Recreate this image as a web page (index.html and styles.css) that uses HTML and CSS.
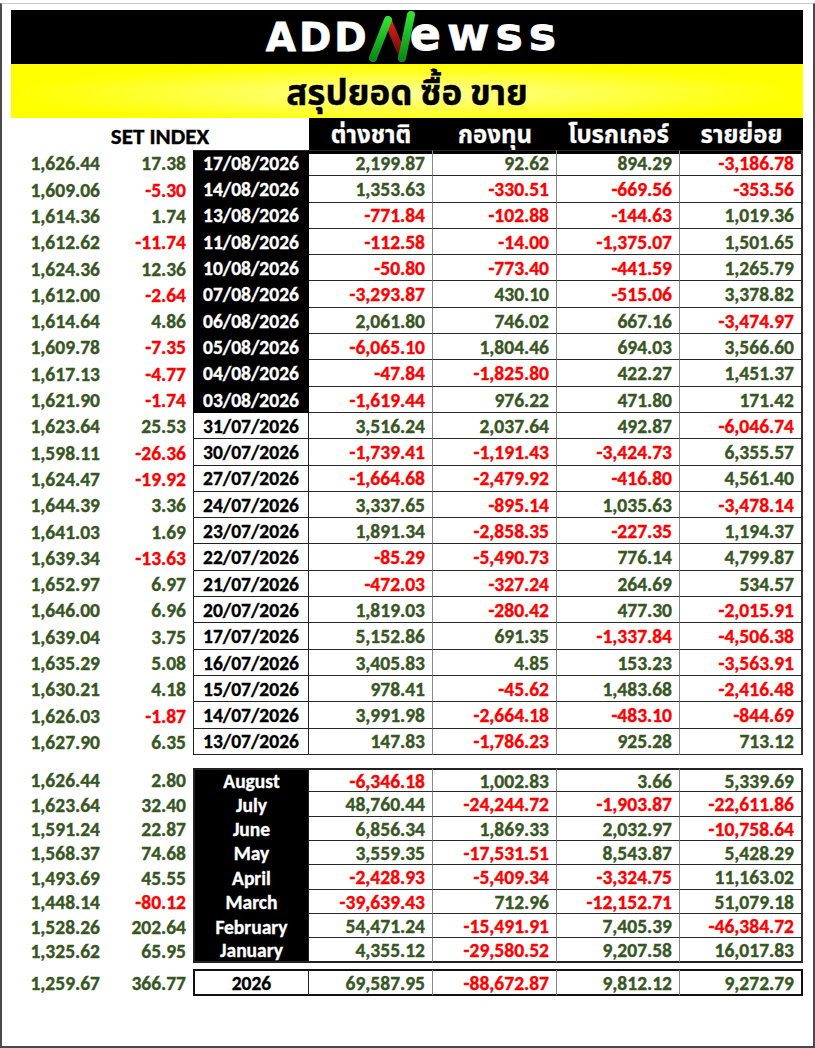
FILE: index.html
```html
<!DOCTYPE html>
<html lang="th">
<head>
<meta charset="utf-8">
<title>ADDNewss - สรุปยอด ซื้อ ขาย</title>
<link rel="stylesheet" href="styles.css">
</head>
<body>
<div class="page">
  <div class="logo-band">
    <div class="logo">
      <span class="caps">ADD</span>
      <svg class="n-mark" width="52" height="56" viewBox="0 0 52 56">
        <defs>
          <linearGradient id="g1" x1="0" y1="1" x2="0" y2="0">
            <stop offset="0" stop-color="#0c8a1a"/>
            <stop offset="1" stop-color="#2fe02f"/>
          </linearGradient>
          <linearGradient id="r1" x1="0" y1="0" x2="0" y2="1">
            <stop offset="0" stop-color="#e02020"/>
            <stop offset="1" stop-color="#6e0b0b"/>
          </linearGradient>
        </defs>
        <line x1="24" y1="12" x2="38" y2="45" stroke="url(#r1)" stroke-width="8" stroke-linecap="round"/>
        <line x1="9" y1="49" x2="24" y2="11" stroke="url(#g1)" stroke-width="8" stroke-linecap="round"/>
        <line x1="38" y1="49" x2="47" y2="6" stroke="url(#g1)" stroke-width="8" stroke-linecap="round"/>
      </svg>
      <span class="lower">ewss</span>
    </div>
  </div>
  <div class="title-band"><h1>สรุปยอด ซื้อ ขาย</h1></div>

  <div class="head">
    <div class="set">SET INDEX</div>
    <div class="h">ต่างชาติ</div>
    <div class="h">กองทุน</div>
    <div class="h">โบรกเกอร์</div>
    <div class="h">รายย่อย</div>
  </div>

  <div class="grid daily">
    <div class="i">1,626.44</div><div class="i">17.38</div><div class="d k">17/08/2026</div><div class="v">2,199.87</div><div class="v">92.62</div><div class="v">894.29</div><div class="v r">-3,186.78</div>
    <div class="i">1,609.06</div><div class="i r">-5.30</div><div class="d k">14/08/2026</div><div class="v">1,353.63</div><div class="v r">-330.51</div><div class="v r">-669.56</div><div class="v r">-353.56</div>
    <div class="i">1,614.36</div><div class="i">1.74</div><div class="d k">13/08/2026</div><div class="v r">-771.84</div><div class="v r">-102.88</div><div class="v r">-144.63</div><div class="v">1,019.36</div>
    <div class="i">1,612.62</div><div class="i r">-11.74</div><div class="d k">11/08/2026</div><div class="v r">-112.58</div><div class="v r">-14.00</div><div class="v r">-1,375.07</div><div class="v">1,501.65</div>
    <div class="i">1,624.36</div><div class="i">12.36</div><div class="d k">10/08/2026</div><div class="v r">-50.80</div><div class="v r">-773.40</div><div class="v r">-441.59</div><div class="v">1,265.79</div>
    <div class="i">1,612.00</div><div class="i r">-2.64</div><div class="d k">07/08/2026</div><div class="v r">-3,293.87</div><div class="v">430.10</div><div class="v r">-515.06</div><div class="v">3,378.82</div>
    <div class="i">1,614.64</div><div class="i">4.86</div><div class="d k">06/08/2026</div><div class="v">2,061.80</div><div class="v">746.02</div><div class="v">667.16</div><div class="v r">-3,474.97</div>
    <div class="i">1,609.78</div><div class="i r">-7.35</div><div class="d k">05/08/2026</div><div class="v r">-6,065.10</div><div class="v">1,804.46</div><div class="v">694.03</div><div class="v">3,566.60</div>
    <div class="i">1,617.13</div><div class="i r">-4.77</div><div class="d k">04/08/2026</div><div class="v r">-47.84</div><div class="v r">-1,825.80</div><div class="v">422.27</div><div class="v">1,451.37</div>
    <div class="i">1,621.90</div><div class="i r">-1.74</div><div class="d k">03/08/2026</div><div class="v r">-1,619.44</div><div class="v">976.22</div><div class="v">471.80</div><div class="v">171.42</div>
    <div class="i">1,623.64</div><div class="i">25.53</div><div class="d">31/07/2026</div><div class="v">3,516.24</div><div class="v">2,037.64</div><div class="v">492.87</div><div class="v r">-6,046.74</div>
    <div class="i">1,598.11</div><div class="i r">-26.36</div><div class="d">30/07/2026</div><div class="v r">-1,739.41</div><div class="v r">-1,191.43</div><div class="v r">-3,424.73</div><div class="v">6,355.57</div>
    <div class="i">1,624.47</div><div class="i r">-19.92</div><div class="d">27/07/2026</div><div class="v r">-1,664.68</div><div class="v r">-2,479.92</div><div class="v r">-416.80</div><div class="v">4,561.40</div>
    <div class="i">1,644.39</div><div class="i">3.36</div><div class="d">24/07/2026</div><div class="v">3,337.65</div><div class="v r">-895.14</div><div class="v">1,035.63</div><div class="v r">-3,478.14</div>
    <div class="i">1,641.03</div><div class="i">1.69</div><div class="d">23/07/2026</div><div class="v">1,891.34</div><div class="v r">-2,858.35</div><div class="v r">-227.35</div><div class="v">1,194.37</div>
    <div class="i">1,639.34</div><div class="i r">-13.63</div><div class="d">22/07/2026</div><div class="v r">-85.29</div><div class="v r">-5,490.73</div><div class="v">776.14</div><div class="v">4,799.87</div>
    <div class="i">1,652.97</div><div class="i">6.97</div><div class="d">21/07/2026</div><div class="v r">-472.03</div><div class="v r">-327.24</div><div class="v">264.69</div><div class="v">534.57</div>
    <div class="i">1,646.00</div><div class="i">6.96</div><div class="d">20/07/2026</div><div class="v">1,819.03</div><div class="v r">-280.42</div><div class="v">477.30</div><div class="v r">-2,015.91</div>
    <div class="i">1,639.04</div><div class="i">3.75</div><div class="d">17/07/2026</div><div class="v">5,152.86</div><div class="v">691.35</div><div class="v r">-1,337.84</div><div class="v r">-4,506.38</div>
    <div class="i">1,635.29</div><div class="i">5.08</div><div class="d">16/07/2026</div><div class="v">3,405.83</div><div class="v">4.85</div><div class="v">153.23</div><div class="v r">-3,563.91</div>
    <div class="i">1,630.21</div><div class="i">4.18</div><div class="d">15/07/2026</div><div class="v">978.41</div><div class="v r">-45.62</div><div class="v">1,483.68</div><div class="v r">-2,416.48</div>
    <div class="i">1,626.03</div><div class="i r">-1.87</div><div class="d">14/07/2026</div><div class="v">3,991.98</div><div class="v r">-2,664.18</div><div class="v r">-483.10</div><div class="v r">-844.69</div>
    <div class="i">1,627.90</div><div class="i">6.35</div><div class="d">13/07/2026</div><div class="v">147.83</div><div class="v r">-1,786.23</div><div class="v">925.28</div><div class="v">713.12</div>
  </div>

  <div class="grid months">
    <div class="i">1,626.44</div><div class="i">2.80</div><div class="d k">August</div><div class="v r">-6,346.18</div><div class="v">1,002.83</div><div class="v">3.66</div><div class="v">5,339.69</div>
    <div class="i">1,623.64</div><div class="i">32.40</div><div class="d k">July</div><div class="v">48,760.44</div><div class="v r">-24,244.72</div><div class="v r">-1,903.87</div><div class="v r">-22,611.86</div>
    <div class="i">1,591.24</div><div class="i">22.87</div><div class="d k">June</div><div class="v">6,856.34</div><div class="v">1,869.33</div><div class="v">2,032.97</div><div class="v r">-10,758.64</div>
    <div class="i">1,568.37</div><div class="i">74.68</div><div class="d k">May</div><div class="v">3,559.35</div><div class="v r">-17,531.51</div><div class="v">8,543.87</div><div class="v">5,428.29</div>
    <div class="i">1,493.69</div><div class="i">45.55</div><div class="d k">April</div><div class="v r">-2,428.93</div><div class="v r">-5,409.34</div><div class="v r">-3,324.75</div><div class="v">11,163.02</div>
    <div class="i">1,448.14</div><div class="i r">-80.12</div><div class="d k">March</div><div class="v r">-39,639.43</div><div class="v">712.96</div><div class="v r">-12,152.71</div><div class="v">51,079.18</div>
    <div class="i">1,528.26</div><div class="i">202.64</div><div class="d k">February</div><div class="v">54,471.24</div><div class="v r">-15,491.91</div><div class="v">7,405.39</div><div class="v r">-46,384.72</div>
    <div class="i">1,325.62</div><div class="i">65.95</div><div class="d k">January</div><div class="v">4,355.12</div><div class="v r">-29,580.52</div><div class="v">9,207.58</div><div class="v">16,017.83</div>
  </div>

  <div class="grid total">
    <div class="i">1,259.67</div><div class="i">366.77</div><div class="d">2026</div><div class="v">69,587.95</div><div class="v r">-88,672.87</div><div class="v">9,812.12</div><div class="v">9,272.79</div>
  </div>
</div>
</body>
</html>
```

FILE: styles.css
```css
* { box-sizing: border-box; }
html, body { margin: 0; padding: 0; background: #fff; }
body {
  font-family: Carlito, Calibri, "Open Sans", "Noto Sans Thai", "Noto Sans", sans-serif;
  font-weight: 700;
}
.page {
  width: 815px;
  height: 1045px;
  margin-top: 3px;
  border-top: 1px solid #c8c8c8;
  border-left: 2px solid #4a4a4a;
  border-right: 2px solid #4a4a4a;
  border-bottom: 2px solid #4a4a4a;
  padding: 6px 10px 0 9px;
}
.logo-band {
  height: 54px;
  background: #000;
  display: flex;
  justify-content: center;
  align-items: center;
}
.logo {
  display: flex;
  align-items: center;
  color: #fff;
  font-family: "DejaVu Sans", sans-serif;
  font-weight: 700;
  margin-left: 14px;
  -webkit-text-stroke: 0.8px #fff;
}
.caps { font-size: 39px; letter-spacing: 3px; line-height: 1; }
.n-mark { margin: 0 -6px 0 -6px; }
.lower { font-size: 46px; letter-spacing: 6px; line-height: 1; margin-top: -6px; }
.title-band {
  height: 54px;
  background: radial-gradient(ellipse at 50% 55%, #ffff9a 0%, #ffff40 40%, #ffff00 70%);
  display: flex;
  justify-content: center;
  align-items: center;
}
.title-band h1 {
  margin: 0;
  font-size: 35px;
  line-height: 1;
  color: #000;
  font-weight: 700;
  padding-top: 4px;
  -webkit-text-stroke: 0.4px #000;
}
.head {
  display: grid;
  grid-template-columns: 298px 124px 124px 123px 123px;
  height: 32px;
}
.head .set {
  font-size: 23px;
  color: #000;
  display: flex;
  align-items: center;
  justify-content: center;
  -webkit-text-stroke: 0.35px #000;
}
.head .h {
  background: #000;
  color: #fff;
  font-size: 24px;
  display: flex;
  align-items: center;
  justify-content: center;
  -webkit-text-stroke: 0.3px #fff;
}
.grid {
  display: grid;
  grid-template-columns: 96px 86px 116px 124px 124px 123px 123px;
  font-size: 19.5px;
}
.daily { grid-auto-rows: 26.3px; }
.months { grid-auto-rows: 24.375px; margin-top: 13px; }
.total { grid-auto-rows: 27px; margin-top: 6px; }

.grid > div {
  display: flex;
  align-items: center;
  justify-content: flex-end;
  padding: 2px 7px 0 0;
  color: #375623;
  line-height: 1;
  -webkit-text-stroke: 0.35px currentColor;
}
.grid > .r { color: #ff0000; }
.grid > .d {
  justify-content: center;
  padding-right: 0;
  color: #000;
  border-left: 1px solid #222;
  border-right: 1px solid #222;
  border-bottom: 1px solid #222;
}
.grid > .d.k { background: #000; color: #fff; border-color: #000; }
.grid > .v {
  border-right: 1px solid #8a8a8a;
  border-bottom: 1px solid #2a2a2a;
}
.grid > div:nth-child(7n) { border-right: 2px solid #333; }
.daily > div:nth-child(n+3):nth-child(-n+7) { border-top: 1px solid #2a2a2a; }

.months > div:nth-child(n+3):nth-child(-n+7) { border-top: 2px solid #222; }
.months > div:nth-child(n+52) { border-bottom: 2px solid #222; }
.months > .d.k { border-bottom: 0; border-left: 2px solid #222; border-right: 1px solid #222; }
.months > .d.k:nth-child(n+52) { border-bottom: 2px solid #222; }

.total > div:nth-child(n+3) { border-top: 2px solid #111; border-bottom: 2px solid #111; }
.total > .d { border-left: 2px solid #111; }
.total > div:nth-child(7n) { border-right: 2px solid #111; }
```
